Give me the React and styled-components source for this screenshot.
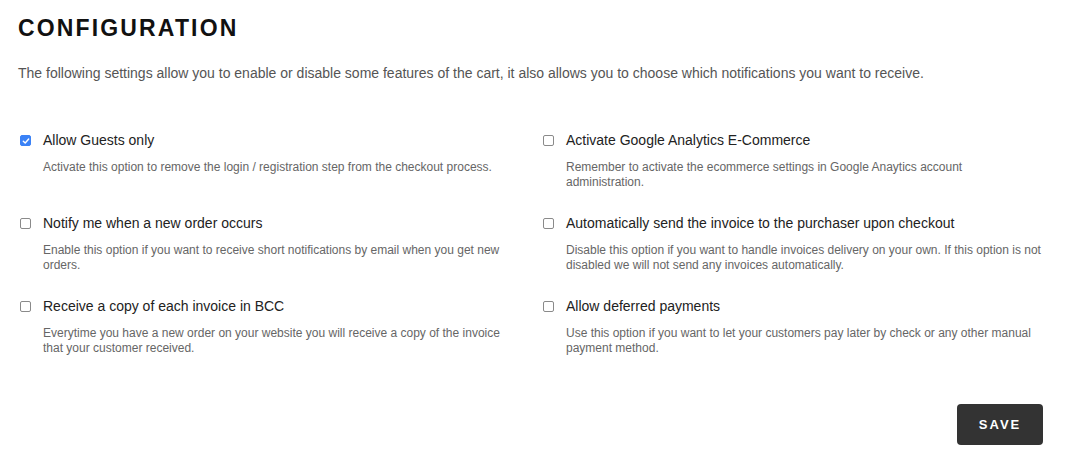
import styled, { createGlobalStyle } from "styled-components";

const GlobalStyle = createGlobalStyle`
  body {
    margin: 0;
    background: #fff;
    font-family: "Liberation Sans", Arial, sans-serif;
  }
`;

const Page = styled.div`
  padding: 14px 22px 0 18px;
`;

const Title = styled.h1`
  margin: 0;
  font-family: "Liberation Sans", Arial, sans-serif;
  font-weight: 700;
  font-size: 23px;
  letter-spacing: 2.15px;
  color: #111;
  line-height: 28px;
`;

const Intro = styled.p`
  margin: 22px 0 0;
  font-size: 14px;
  color: #555;
  line-height: 18px;
`;

const Grid = styled.div`
  display: grid;
  grid-template-columns: 523px 1fr;
  row-gap: 16px;
  margin-top: 50px;
  padding-left: 2px;
`;

const Option = styled.div`
  display: grid;
  grid-template-columns: 23px 1fr;
  align-items: start;
  min-height: 67px;
`;

const Box = styled.span`
  width: 11px;
  height: 11px;
  margin-top: 3px;
  border-radius: 2px;
  box-sizing: border-box;
  border: 1px solid ${(p) => (p.$checked ? "#3b82f6" : "#8a8a8a")};
  background: ${(p) => (p.$checked ? "#3b82f6" : "#fff")};
  display: flex;
  align-items: center;
  justify-content: center;
`;

const Label = styled.div`
  font-size: 14px;
  color: #222;
  line-height: 17px;
`;

const Desc = styled.div`
  margin-top: 11px;
  font-size: 12px;
  line-height: 15px;
  color: #666;
  max-width: ${(p) => p.$max}px;
`;

const Footer = styled.div`
  display: flex;
  justify-content: flex-end;
  margin-top: 39px;
`;

const SaveButton = styled.button`
  width: 86px;
  height: 41px;
  border: none;
  border-radius: 4px;
  background: #333;
  color: #fff;
  font-family: "Liberation Sans", Arial, sans-serif;
  font-weight: 700;
  font-size: 13px;
  letter-spacing: 2px;
  cursor: pointer;
`;

const options = [
  {
    label: "Allow Guests only",
    desc: "Activate this option to remove the login / registration step from the checkout process.",
    checked: true,
    max: 470,
  },
  {
    label: "Activate Google Analytics E-Commerce",
    desc: "Remember to activate the ecommerce settings in Google Anaytics account administration.",
    max: 480,
  },
  {
    label: "Notify me when a new order occurs",
    desc: "Enable this option if you want to receive short notifications by email when you get new orders.",
    max: 470,
  },
  {
    label: "Automatically send the invoice to the purchaser upon checkout",
    desc: "Disable this option if you want to handle invoices delivery on your own. If this option is not disabled we will not send any invoices automatically.",
    max: 480,
  },
  {
    label: "Receive a copy of each invoice in BCC",
    desc: "Everytime you have a new order on your website you will receive a copy of the invoice that your customer received.",
    max: 470,
  },
  {
    label: "Allow deferred payments",
    desc: "Use this option if you want to let your customers pay later by check or any other manual payment method.",
    max: 480,
  },
];

export default function App() {
  return (
    <Page>
      <GlobalStyle />
      <Title>CONFIGURATION</Title>
      <Intro>
        The following settings allow you to enable or disable some features of the cart, it also allows you to choose which notifications you want to receive.
      </Intro>
      <Grid>
        {options.map((o) => (
          <Option key={o.label}>
            <Box $checked={o.checked}>
              {o.checked && (
                <svg width="8" height="8" viewBox="0 0 8 8">
                  <path d="M1.3 4.2 L3.2 6 L6.7 2" fill="none" stroke="#fff" strokeWidth="1.4" strokeLinecap="round" strokeLinejoin="round" />
                </svg>
              )}
            </Box>
            <div>
              <Label>{o.label}</Label>
              <Desc $max={o.max}>{o.desc}</Desc>
            </div>
          </Option>
        ))}
      </Grid>
      <Footer>
        <SaveButton>SAVE</SaveButton>
      </Footer>
    </Page>
  );
}
